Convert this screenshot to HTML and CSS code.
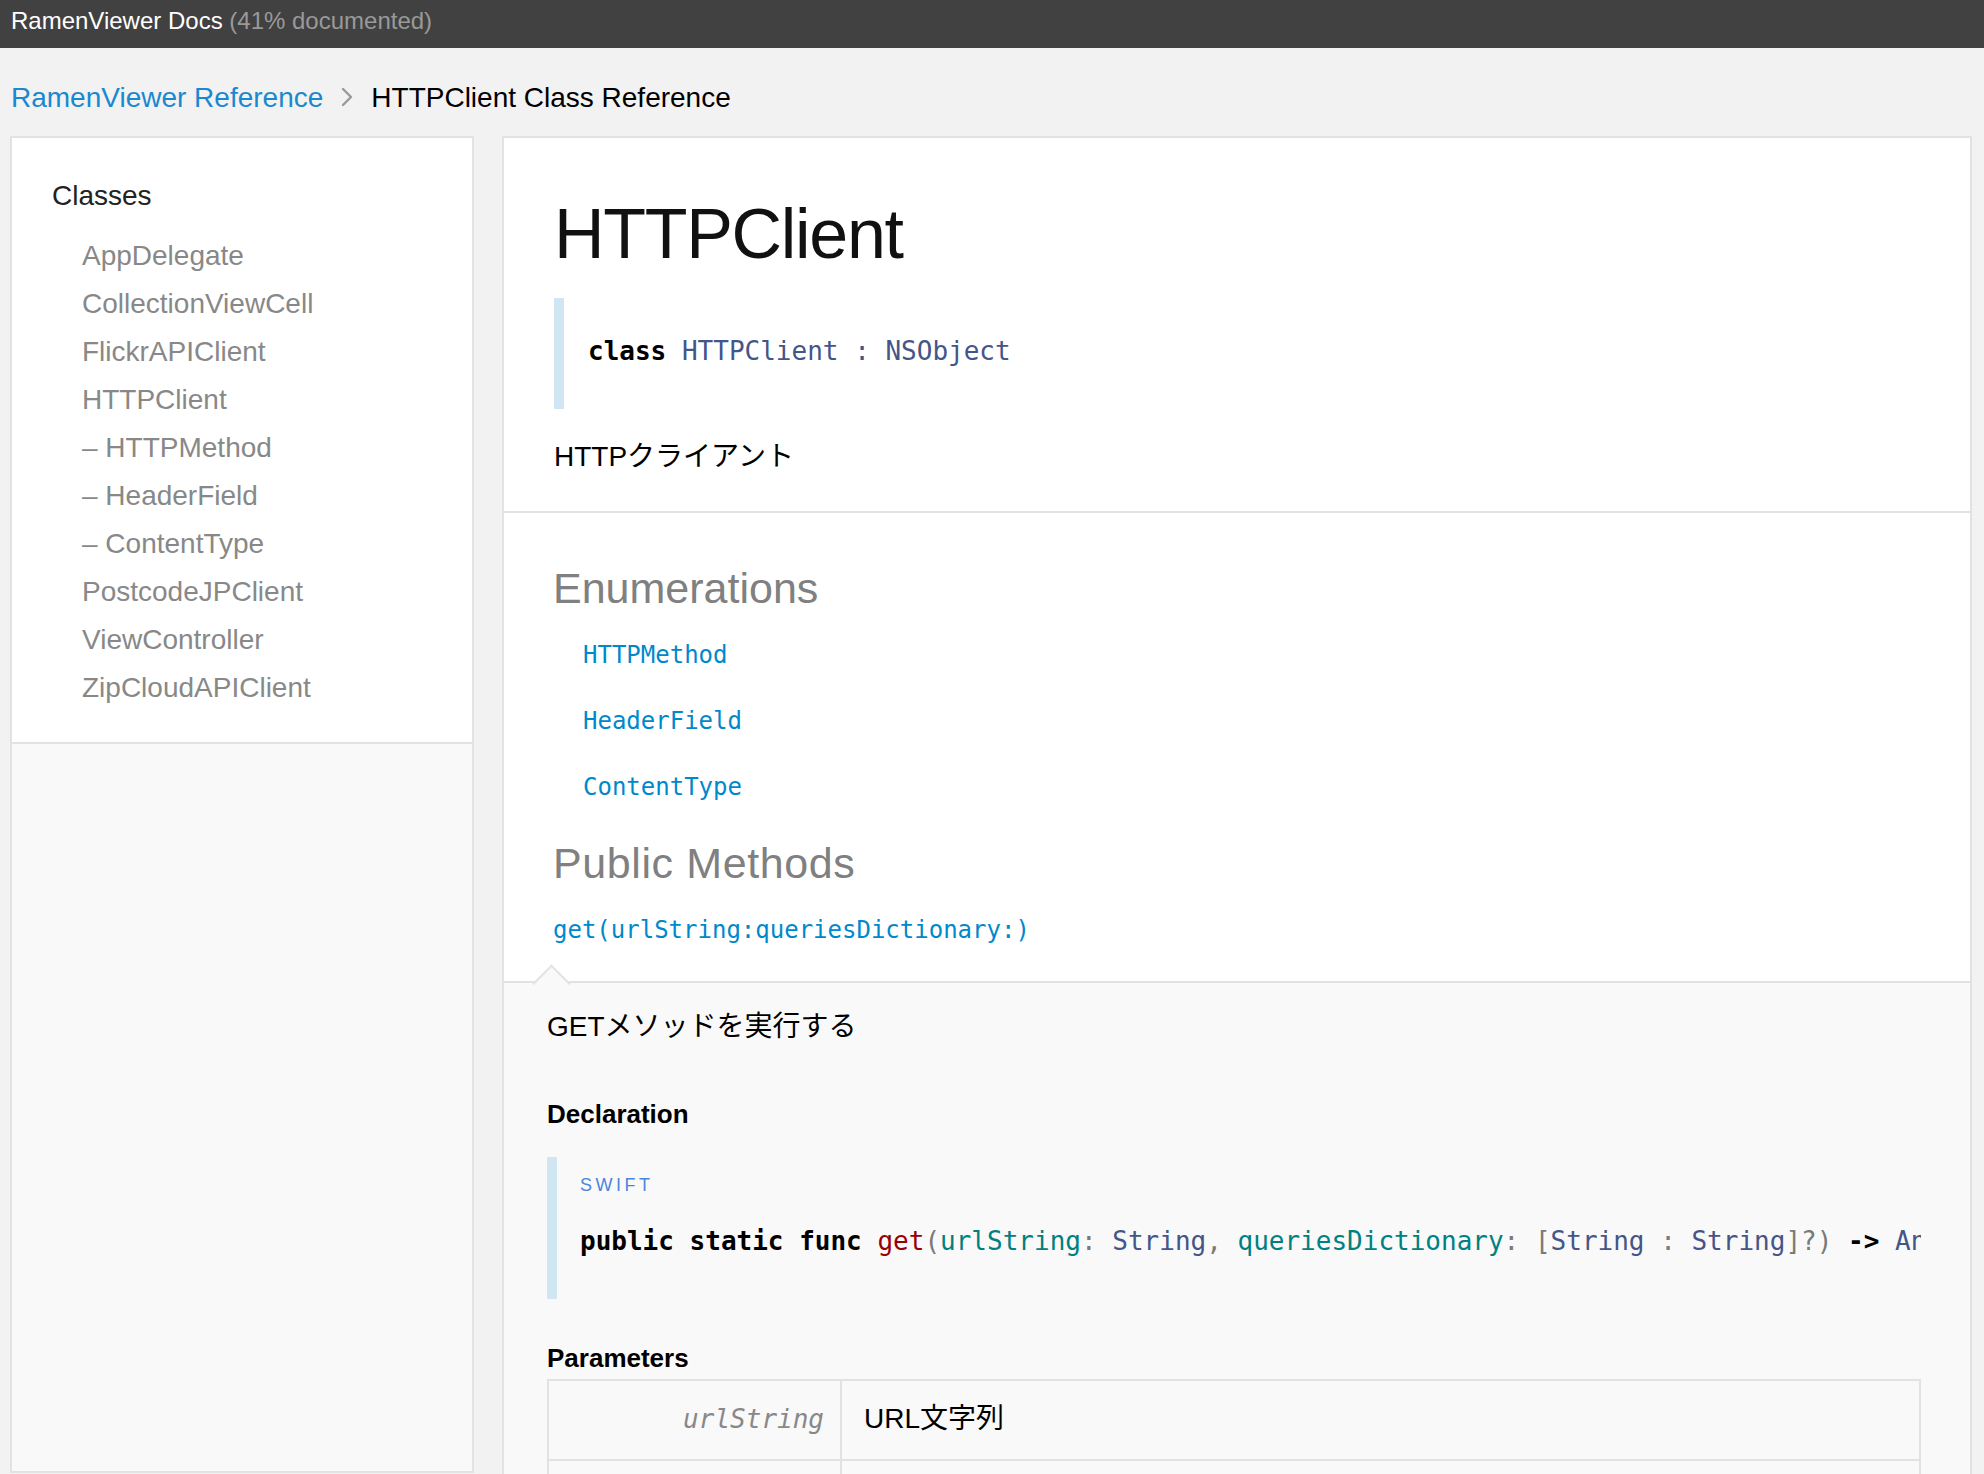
FILE: index.html
```html
<!DOCTYPE html>
<html lang="ja">
<head>
<meta charset="utf-8">
<title>HTTPClient Class Reference</title>
<link rel="stylesheet" href="styles.css">
</head>
<body>
<header class="header"><span class="header-title">RamenViewer Docs</span> <span class="coverage">(41% documented)</span></header>
<nav class="breadcrumbs"><a class="crumb-link" href="#">RamenViewer Reference</a><svg class="chevron" viewBox="0 0 12 20" aria-hidden="true"><path d="M2 2 L10 10 L2 18" fill="none" stroke="#9a9a9a" stroke-width="2.4" stroke-linecap="round" stroke-linejoin="round"/></svg><span class="crumb-current">HTTPClient Class Reference</span></nav>
<div class="layout">
  <aside class="sidebar">
    <div class="nav-top">
      <div class="nav-group-title">Classes</div>
      <ul class="nav-list">
        <li><a href="#">AppDelegate</a></li>
        <li><a href="#">CollectionViewCell</a></li>
        <li><a href="#">FlickrAPIClient</a></li>
        <li><a href="#">HTTPClient</a></li>
        <li><a href="#">– HTTPMethod</a></li>
        <li><a href="#">– HeaderField</a></li>
        <li><a href="#">– ContentType</a></li>
        <li><a href="#">PostcodeJPClient</a></li>
        <li><a href="#">ViewController</a></li>
        <li><a href="#">ZipCloudAPIClient</a></li>
      </ul>
    </div>
    <div class="nav-fill"></div>
  </aside>
  <main class="content">
    <section class="intro">
      <h1 class="title">HTTPClient</h1>
      <div class="decl"><span class="kw">class</span> <span class="ty">HTTPClient</span> <span class="ty">:</span> <span class="ty">NSObject</span></div>
      <p class="abstract">HTTPクライアント</p>
    </section>
    <section class="topics">
      <h3 class="topic-title">Enumerations</h3>
      <ul class="enum-list">
        <li><a href="#">HTTPMethod</a></li>
        <li><a href="#">HeaderField</a></li>
        <li><a href="#">ContentType</a></li>
      </ul>
      <h3 class="topic-title methods-title">Public Methods</h3>
      <a class="method-link" href="#">get(urlString:queriesDictionary:)</a>
    </section>
    <section class="detail">
      <p class="detail-abstract">GETメソッドを実行する</p>
      <h4 class="detail-heading">Declaration</h4>
      <div class="decl-box">
        <div class="language">SWIFT</div>
        <div class="code"><span class="kw">public</span> <span class="kw">static</span> <span class="kw">func</span> <span class="fn">get</span><span class="pn">(</span><span class="arg">urlString</span><span class="pn">:</span> <span class="ty">String</span><span class="pn">,</span> <span class="arg">queriesDictionary</span><span class="pn">:</span> <span class="pn">[</span><span class="ty">String</span> <span class="pn">:</span> <span class="ty">String</span><span class="pn">]?)</span> <span class="kw">-&gt;</span> <span class="ty">AnyObject?</span></div>
      </div>
      <h4 class="detail-heading params-heading">Parameters</h4>
      <div class="params">
        <div class="param-row">
          <div class="param-name">urlString</div>
          <div class="param-desc">URL文字列</div>
        </div>
        <div class="param-row param-row-next">
          <div class="param-name"></div>
          <div class="param-desc"></div>
        </div>
      </div>
    </section>
  </main>
</div>
</body>
</html>
```
FILE: styles.css
```css
* {
  box-sizing: border-box;
}

html,
body {
  margin: 0;
  padding: 0;
}

body {
  height: 1474px;
  overflow: hidden;
  background: #f2f2f2;
  color: #000;
  font-family: "Liberation Sans", "Noto Sans CJK JP", sans-serif;
}

a {
  text-decoration: none;
}

ul {
  list-style: none;
  margin: 0;
  padding: 0;
}

/* Header */
.header {
  height: 48px;
  background: #414141;
  padding-left: 11px;
  font-size: 24px;
  line-height: 41px;
  white-space: nowrap;
}

.header-title {
  color: #fff;
}

.coverage {
  color: #999;
}

/* Breadcrumbs */
.breadcrumbs {
  height: 88px;
  padding: 18px 0 6px 11px;
  font-size: 28px;
  line-height: 64px;
  white-space: nowrap;
}

.crumb-link {
  color: #1a88cf;
}

.chevron {
  width: 12px;
  height: 20px;
  margin: 0 18px 0 18px;
  vertical-align: baseline;
}

.crumb-current {
  color: #000;
}

/* Layout */
.layout {
  display: flex;
  gap: 28px;
  padding: 0 12px 0 10px;
  height: 1338px;
}

/* Sidebar */
.sidebar {
  width: 464px;
  flex: none;
  height: 1337px;
  border: 2px solid #e2e2e2;
  background: #f9f9f9;
  display: flex;
  flex-direction: column;
}

.nav-top {
  background: #fff;
  padding: 40px 0 30px 40px;
  border-bottom: 2px solid #e2e2e2;
}

.nav-group-title {
  font-size: 28px;
  line-height: 36px;
  color: #222;
}

.nav-list {
  margin-top: 18px;
  padding-left: 30px;
}

.nav-list li {
  font-size: 28px;
  line-height: 48px;
}

.nav-list a {
  color: #888;
}

.nav-fill {
  flex: 1;
}

/* Main content */
.content {
  flex: 1;
  min-width: 0;
  border: 2px solid #e2e2e2;
  border-bottom: none;
  background: #fff;
  overflow: hidden;
}

.intro {
  padding: 54px 50px 36px 50px;
  border-bottom: 2px solid #e2e2e2;
}

.title {
  margin: 0;
  font-size: 70px;
  line-height: 84px;
  font-weight: normal;
  letter-spacing: -1.3px;
  color: #111;
}

.decl {
  margin-top: 22px;
  border-left: 10px solid #d0e6f3;
  padding: 35px 0 40px 24px;
  font-family: "DejaVu Sans Mono", monospace;
  font-size: 26px;
  line-height: 36px;
  white-space: pre;
}

.abstract {
  margin: 30px 0 0;
  font-size: 28px;
  line-height: 36px;
}

.kw {
  font-weight: bold;
  color: #000;
}

.ty {
  color: #445588;
}

.fn {
  color: #990000;
}

.arg {
  color: #008080;
}

.pn {
  color: #7a7a7a;
}

/* Topics */
.topics {
  padding: 49px 50px 33px 49px;
}

.topic-title {
  margin: 0;
  font-size: 43px;
  line-height: 52px;
  font-weight: normal;
  color: #808080;
}

.enum-list {
  margin-top: 8px;
  padding-left: 30px;
}

.enum-list li {
  font-family: "DejaVu Sans Mono", monospace;
  font-size: 24px;
  line-height: 66px;
}

.enum-list a,
.method-link {
  color: #0088cc;
}

.methods-title {
  margin-top: 17px;
  letter-spacing: 0.6px;
}

.method-link {
  display: block;
  margin-top: 23px;
  font-family: "DejaVu Sans Mono", monospace;
  font-size: 24px;
  line-height: 36px;
}

/* Detail */
.detail {
  position: relative;
  background: #f9f9f9;
  border-top: 2px solid #e2e2e2;
  padding: 24px 49px 0 43px;
}

.detail::before {
  content: "";
  position: absolute;
  left: 34px;
  top: -13.5px;
  width: 25px;
  height: 25px;
  background: #f9f9f9;
  border-top: 2px solid #e2e2e2;
  border-left: 2px solid #e2e2e2;
  transform: rotate(45deg);
}

.detail-abstract {
  margin: 0;
  font-size: 28px;
  line-height: 40px;
}

.detail-heading {
  margin: 50px 0 0;
  font-size: 26px;
  line-height: 34px;
  font-weight: bold;
}

.decl-box {
  margin-top: 26px;
  width: 1374px;
  border-left: 10px solid #d0e6f3;
  padding: 16px 0 40px 23px;
  overflow: hidden;
}

.language {
  font-size: 18px;
  line-height: 24px;
  letter-spacing: 3.5px;
  color: #4a86dc;
}

.code {
  margin-top: 26px;
  font-family: "DejaVu Sans Mono", monospace;
  font-size: 26px;
  line-height: 36px;
  white-space: pre;
}

.params-heading {
  margin-top: 42px;
}

.params {
  margin-top: 4px;
  width: 1374px;
  border: 2px solid #e2e2e2;
  border-bottom: none;
}

.param-row {
  display: grid;
  grid-template-columns: 293px 1fr;
  border-bottom: 2px solid #e2e2e2;
}

.param-row-next {
  min-height: 80px;
}

.param-name {
  border-right: 2px solid #e2e2e2;
  text-align: right;
  padding: 20px 16px 22px 0;
  font-family: "DejaVu Sans Mono", monospace;
  font-style: italic;
  font-size: 26px;
  line-height: 36px;
  color: #888;
}

.param-desc {
  padding: 20px 22px 22px 22px;
  font-size: 28px;
  line-height: 36px;
}
```
